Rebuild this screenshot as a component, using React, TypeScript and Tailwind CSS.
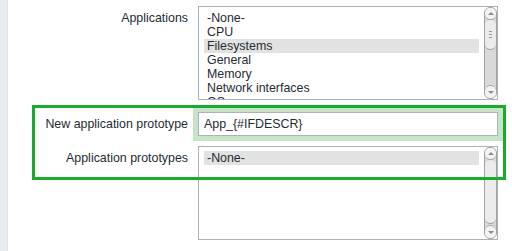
import React from "react"

const appItems = ["-None-", "CPU", "Filesystems", "General", "Memory", "Network interfaces", "OS"]

function Scrollbar({ thumb }: { thumb: number }) {
  return (
    <div className="flex w-[13px] flex-col overflow-hidden rounded-[6px] border border-[#a3a3a3] bg-[#d9d9d9]">
      <div className="flex h-[12px] shrink-0 items-center justify-center rounded-b-[6px] border-b border-[#a3a3a3] bg-[#f3f3f3]">
        <div className="h-0 w-0 border-x-[3px] border-b-[3px] border-x-transparent border-b-[#8a8a8a]" />
      </div>
      <div
        className="flex shrink-0 flex-col items-center justify-center gap-[2px] rounded-[6px] border-b border-[#a3a3a3] bg-[#ececec]"
        style={{ height: thumb }}
      >
        {thumb < 40 && (
          <>
            <div className="h-px w-[3px] bg-[#9a9a9a]" />
            <div className="h-px w-[3px] bg-[#9a9a9a]" />
            <div className="h-px w-[3px] bg-[#9a9a9a]" />
          </>
        )}
      </div>
      <div className="flex-1" />
      <div className="flex h-[13px] shrink-0 items-center justify-center rounded-t-[6px] border-t border-[#a3a3a3] bg-[#f3f3f3]">
        <div className="h-0 w-0 border-x-[3px] border-t-[3px] border-x-transparent border-t-[#8a8a8a]" />
      </div>
    </div>
  )
}

function ListBox({ items, selected, thumb }: { items: string[]; selected: number; thumb: number }) {
  return (
    <div className="flex h-[94px] w-[300px] border border-[#a9b4b8] bg-white">
      <div className="w-[280px] overflow-hidden pl-[5px] pt-[4px]">
        {items.map((item, i) => (
          <div
            key={item}
            className={`h-[14px] w-[276px] px-[3px] leading-[14px] ${i === selected ? "bg-[#e2e2e2]" : ""}`}
          >
            {item}
          </div>
        ))}
      </div>
      <div className="ml-auto flex">
        <Scrollbar thumb={thumb} />
      </div>
    </div>
  )
}

export default function App() {
  return (
    <div
      className="relative flex h-[251px] w-[512px] overflow-hidden bg-white text-[12.4px] leading-[14px] text-[#1f2c33]"
      style={{ fontFamily: '"Liberation Sans", Arial, sans-serif' }}
    >
      <div className="w-[8px] shrink-0 border-r border-[#dde2e5] bg-[#e9ecef]" />
      <div className="grid grid-cols-[180px_300px] content-start gap-x-[10px] pt-[6px]">
        <div className="pt-[5px] text-right">Applications</div>
        <ListBox items={appItems} selected={2} thumb={30} />

        <div className="mt-[12px] flex h-[24px] items-center justify-end">New application prototype</div>
        <div className="mt-[12px] flex h-[24px] items-center border border-[#a9b4b8] bg-white pl-[5px] shadow-[0_0_0_5px_#c7e4c9]">
          App_{"{#IFDESCR}"}
        </div>

        <div className="mt-[10px] pt-[5px] text-right">Application prototypes</div>
        <div className="mt-[10px]">
          <ListBox items={["-None-"]} selected={0} thumb={64} />
        </div>
      </div>

      <div className="pointer-events-none absolute left-[32px] top-[105px] h-[75px] w-[474px] border-[3px] border-[#1aab2c]" />
    </div>
  )
}
